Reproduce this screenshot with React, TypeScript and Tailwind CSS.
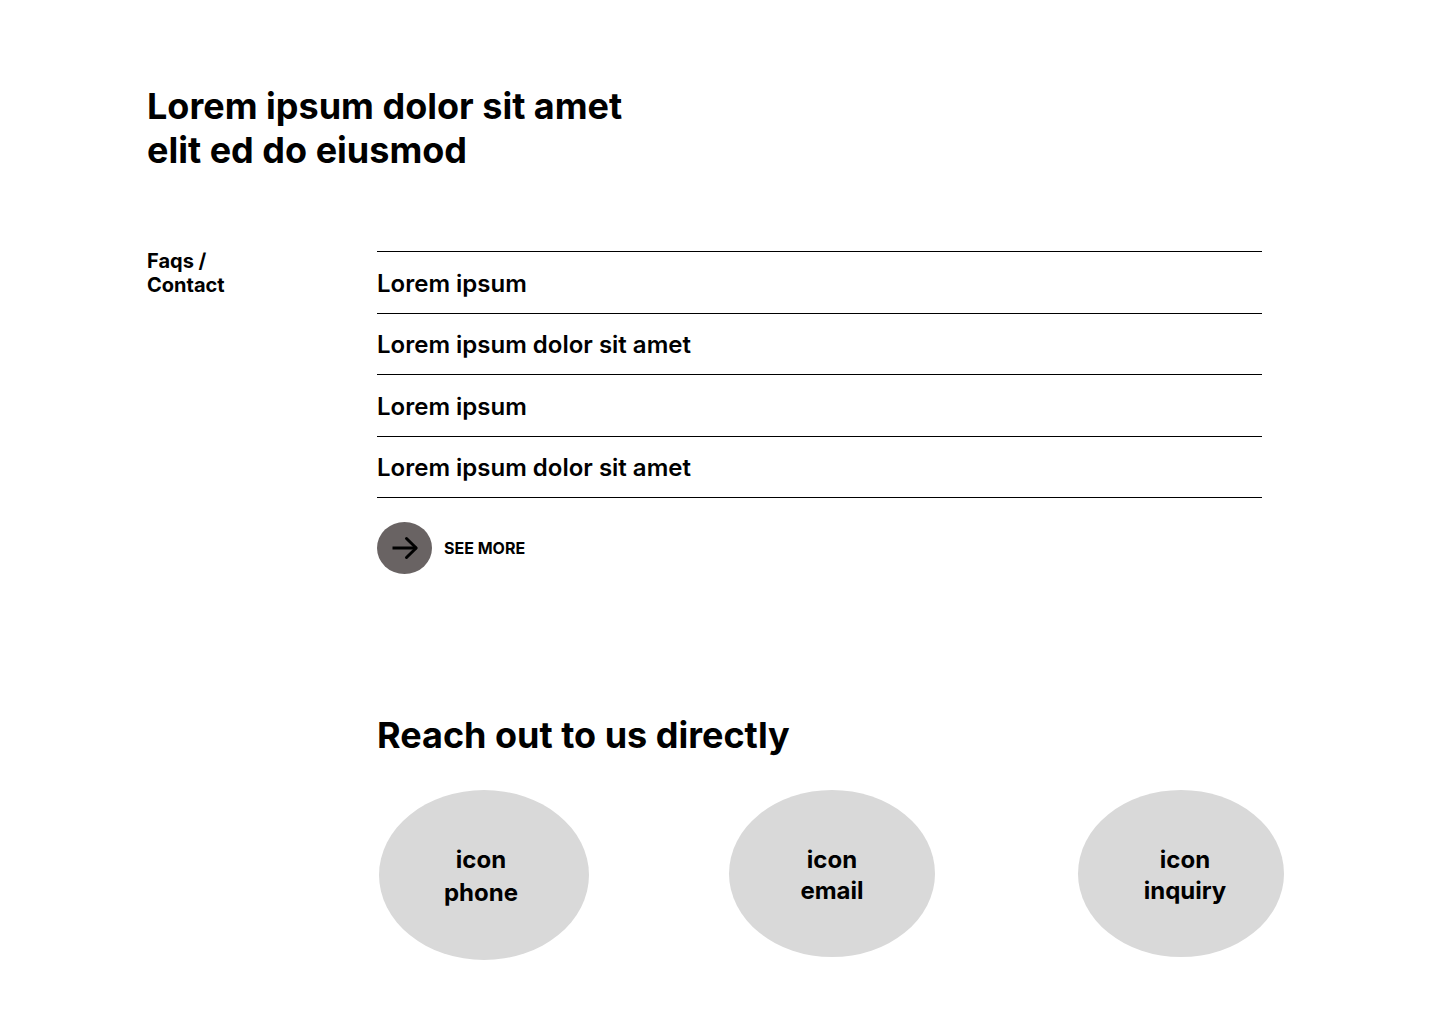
const questions = ["Lorem ipsum", "Lorem ipsum dolor sit amet", "Lorem ipsum", "Lorem ipsum dolor sit amet"];

export default function App() {
  return (
    <main className="min-h-screen bg-white pt-21 pb-16 pl-[147px] pr-[156px] font-['Inter',sans-serif] text-black">
      <h1 className="text-4xl leading-11 font-bold">
        Lorem ipsum dolor sit amet
        <br />
        elit ed do eiusmod
      </h1>
      <div className="mt-[77px] flex">
        <h2 className="w-[230px] shrink-0 text-xl leading-6 font-bold">
          Faqs /<br />
          Contact
        </h2>
        <div className="min-w-0 flex-1 pt-0.5">
          <section className="mr-[22px]">
            <ul className="border-t border-black">
              {questions.map((question, i) => (
                <li key={i} className="border-b border-black pt-4 pb-[15px] odd:pt-[17px]">
                  <button type="button" className="block w-full text-left text-2xl leading-[29px] font-semibold">
                    {question}
                  </button>
                </li>
              ))}
            </ul>
            <button type="button" className="mt-6 flex items-center gap-3 font-bold">
              <span className="flex h-[52px] w-[55px] items-center justify-center rounded-[50%] bg-[#696363]">
                <svg width="28" height="24" viewBox="0 0 28 24" fill="none" stroke="black" strokeWidth="3" aria-hidden="true">
                  <path d="M1.5 12H25.5" />
                  <path d="M15.5 2.5L25.2 12L15.5 21.5" strokeLinecap="round" strokeLinejoin="round" />
                </svg>
              </span>
              SEE MORE
            </button>
          </section>
          <section className="mt-[139px]">
            <h2 className="text-4xl leading-11 font-bold">Reach out to us directly</h2>
            <div className="mt-[33px] ml-0.5 flex items-start justify-between text-2xl font-bold">
              <a href="#phone" className="flex h-[170px] w-[210px] flex-col items-center justify-center rounded-[50%] bg-[#d9d9d9] pt-0.5 pr-1.5 leading-[33px]">
                <span>icon</span>
                <span>phone</span>
              </a>
              <a href="#email" className="mr-[3px] flex h-[167px] w-[206px] flex-col items-center justify-center rounded-[50%] bg-[#d9d9d9] pt-0.5 leading-[31px]">
                <span>icon</span>
                <span>email</span>
              </a>
              <a href="#inquiry" className="flex h-[167px] w-[206px] flex-col items-center justify-center rounded-[50%] bg-[#d9d9d9] pt-0.5 pl-2 leading-[31px]">
                <span>icon</span>
                <span>inquiry</span>
              </a>
            </div>
          </section>
        </div>
      </div>
    </main>
  );
}
